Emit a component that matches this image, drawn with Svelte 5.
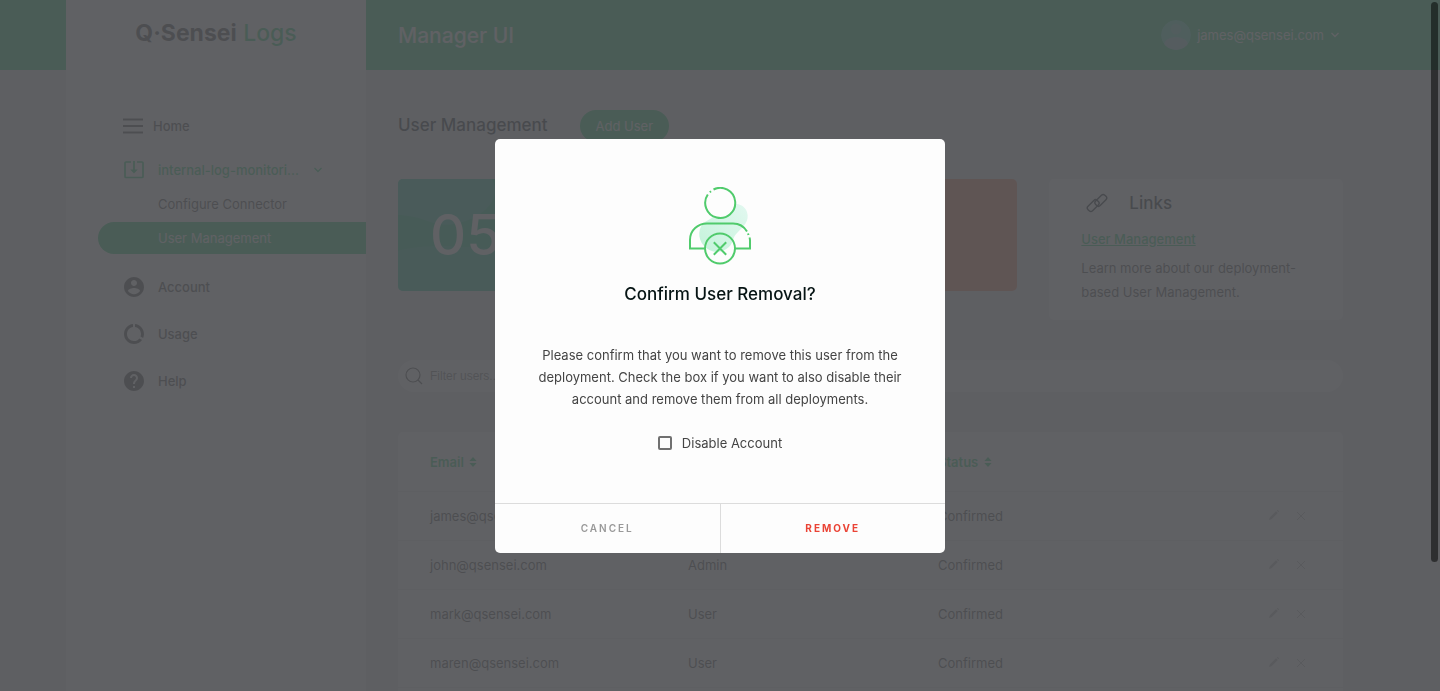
<script lang="ts">
  let filter = $state('');
  let disableAccount = $state(false);
  let modalOpen = $state(true);

  const users = [
    { email: 'james@qsensei.com', role: 'Admin', status: 'Confirmed' },
    { email: 'john@qsensei.com', role: 'Admin', status: 'Confirmed' },
    { email: 'mark@qsensei.com', role: 'User', status: 'Confirmed' },
    { email: 'maren@qsensei.com', role: 'User', status: 'Confirmed' }
  ];

  let visibleUsers = $derived(users.filter((u) => u.email.includes(filter.trim())));

  function closeModal() {
    modalOpen = false;
  }
</script>

{#snippet chevron()}
  <svg class="chevron" width="10" height="6" viewBox="0 0 10 6" aria-hidden="true">
    <path d="M1.5 1 5 4.5 8.5 1" fill="none" stroke="currentColor" stroke-width="1.3" />
  </svg>
{/snippet}

{#snippet sortIcon()}
  <svg width="8" height="10" viewBox="0 0 8 10" aria-hidden="true">
    <path d="M4 0 7.6 4H.4zM4 10 .4 6h7.2z" fill="currentColor" />
  </svg>
{/snippet}

<div class="page">
  <header class="topbar">
    <div class="topbar-inner">
      <h1>Manager UI</h1>
      <button class="user-menu" type="button">
        <svg width="30" height="30" viewBox="0 0 30 30" aria-hidden="true">
          <clipPath id="avatar"><circle cx="15" cy="15" r="15" /></clipPath>
          <g clip-path="url(#avatar)">
            <circle cx="15" cy="15" r="15" fill="#50dcb8" />
            <circle cx="15" cy="9" r="5.5" fill="#70d4c0" />
            <ellipse cx="15" cy="25" rx="12" ry="8" fill="#8ccccc" />
          </g>
        </svg>
        <span>james@qsensei.com</span>
        {@render chevron()}
      </button>
    </div>
  </header>

  <aside class="sidebar">
    <div class="logo"><b>Q·Sensei</b> <span>Logs</span></div>
    <nav>
      <a class="item home" href="#home">
        <svg width="20" height="16" viewBox="0 0 20 16" aria-hidden="true">
          <path d="M0 1.5h20M0 8h20M0 14.5h20" stroke="currentColor" stroke-width="2" />
        </svg>
        Home
      </a>
      <a class="item deployment" href="#deployment">
        <svg width="20" height="18" viewBox="0 0 20 18" aria-hidden="true">
          <path d="M7 1H2a1 1 0 0 0-1 1v13.500a1 1 0 0 0 1 1h16a1 1 0 0 0 1-1V2a1 1 0 0 0-1-1h-5" fill="none" stroke="currentColor" stroke-width="1.7" />
          <path d="M9.100 0h1.800v8.500h2.900L10 12.500 6.200 8.500h2.900z" fill="currentColor" />
        </svg>
        <span>internal-log-monitori...</span>
        {@render chevron()}
      </a>
      <a class="sub" href="#connector">Configure Connector</a>
      <a class="sub active" href="#users">User Management</a>
      <a class="item account" href="#account">
        <svg width="20" height="20" viewBox="2 2 20 20" aria-hidden="true">
          <path d="M12 2C6.480 2 2 6.480 2 12s4.480 10 10 10 10-4.480 10-10S17.520 2 12 2zm0 3c1.660 0 3 1.340 3 3s-1.340 3-3 3-3-1.340-3-3 1.340-3 3-3zm0 14.200c-2.500 0-4.710-1.280-6-3.220.030-1.990 4-3.080 6-3.080 1.990 0 5.970 1.090 6 3.080-1.290 1.940-3.500 3.220-6 3.220z" fill="currentColor" />
        </svg>
        Account
      </a>
      <a class="item" href="#usage">
        <svg width="20" height="20" viewBox="2 2 20 20" aria-hidden="true">
          <path d="M13 2.050v3.030c3.390.490 6 3.390 6 6.920 0 .900-.180 1.750-.480 2.540l2.600 1.530c.560-1.240.880-2.620.880-4.070 0-5.180-3.950-9.450-9-9.950zM12 19c-3.870 0-7-3.130-7-7 0-3.530 2.610-6.430 6-6.920V2.050c-5.060.500-9 4.760-9 9.950 0 5.520 4.470 10 9.990 10 3.310 0 6.240-1.610 8.060-4.090l-2.600-1.530C16.170 17.980 14.210 19 12 19z" fill="currentColor" />
        </svg>
        Usage
      </a>
      <a class="item" href="#help">
        <svg width="20" height="20" viewBox="2 2 20 20" aria-hidden="true">
          <path d="M12 2C6.480 2 2 6.480 2 12s4.480 10 10 10 10-4.480 10-10S17.520 2 12 2zm1 17h-2v-2h2v2zm2.070-7.750l-.9.920C13.450 12.900 13 13.500 13 15h-2v-.500c0-1.100.450-2.100 1.170-2.830l1.240-1.260c.370-.360.590-.860.590-1.410 0-1.100-.9-2-2-2s-2 .9-2 2H8c0-2.210 1.790-4 4-4s4 1.790 4 4c0 .880-.360 1.680-.930 2.250z" fill="currentColor" />
        </svg>
        Help
      </a>
    </nav>
  </aside>

  <main>
    <div class="heading">
      <h2>User Management</h2>
      <button type="button">Add User</button>
    </div>

    <section class="cards">
      <div class="stat total">
        <svg class="waves" viewBox="0 0 294 112" preserveAspectRatio="none" aria-hidden="true">
          <path d="M0 0H94C110 30 60 52 36 44 20 38 8 36 0 36z" fill="#24c49c" />
          <path d="M0 72C34 62 90 70 140 74s110 20 154 0v38H0z" fill="#24c49c" opacity=".7" />
        </svg>
        <strong>05</strong>
      </div>
      <div class="stat pending"></div>
      <div class="links">
        <h3>
          <svg width="22" height="20" viewBox="0 0 22 20" aria-hidden="true">
            <g fill="none" stroke="currentColor" stroke-width="1.4">
              <rect x="-6.500" y="-3.200" width="13" height="6.400" rx="2.400" transform="translate(7.200 12.600) rotate(-45)" />
              <rect x="-6.500" y="-3.200" width="13" height="6.400" rx="2.400" transform="translate(14.800 7.400) rotate(-45)" />
            </g>
          </svg>
          Links
        </h3>
        <a href="#docs">User Management</a>
        <p>Learn more about our deployment-based User Management.</p>
      </div>
    </section>

    <label class="search">
      <svg width="18" height="18" viewBox="0 0 18 18" aria-hidden="true">
        <circle cx="8" cy="8" r="7" fill="none" stroke="currentColor" stroke-width="1.200" />
        <path d="m13 13 4 4" stroke="currentColor" stroke-width="1.200" />
      </svg>
      <input type="text" placeholder="Filter users..." aria-label="Filter users" bind:value={filter} />
    </label>

    <div class="panel">
      <table>
        <colgroup>
          <col class="col-email" />
          <col class="col-role" />
          <col />
          <col class="col-actions" />
        </colgroup>
        <thead>
          <tr>
            <th>Email {@render sortIcon()}</th>
            <th>Role {@render sortIcon()}</th>
            <th>Status {@render sortIcon()}</th>
            <th></th>
          </tr>
        </thead>
        <tbody>
          {#each visibleUsers as user (user.email)}
            <tr>
              <td>{user.email}</td>
              <td>{user.role}</td>
              <td>{user.status}</td>
              <td>
                <div class="actions">
                  <button type="button" aria-label="Edit user">
                    <svg width="12" height="12" viewBox="0 0 12 12" aria-hidden="true">
                      <path d="M1 11l.7-2.500L8 2.300 9.700 4 3.500 10.300zM8.800 1.600l.8-.8 1.600 1.600-.8.8z" fill="currentColor" />
                    </svg>
                  </button>
                  <button type="button" aria-label="Remove user" onclick={() => (modalOpen = true)}>
                    <svg width="10" height="10" viewBox="0 0 10 10" aria-hidden="true">
                      <path d="m1 1 8 8M9 1 1 9" stroke="currentColor" />
                    </svg>
                  </button>
                </div>
              </td>
            </tr>
          {/each}
        </tbody>
      </table>
    </div>
  </main>
</div>

{#if modalOpen}
  <div class="overlay">
    <div class="modal" role="dialog" aria-modal="true" aria-labelledby="modal-title">
      <div class="modal-body">
        <svg width="64" height="78" viewBox="0 0 64 78" aria-hidden="true">
          <defs>
            <linearGradient id="blob" x1="0" y1="1" x2="1" y2="0">
              <stop offset="0" stop-color="#c4f3da" />
              <stop offset="1" stop-color="#e2f8f0" />
            </linearGradient>
          </defs>
          <path d="M36 21C43 14 56 16 59 25c3 9-4 15-9 20-6 5-4 10-9 15-7 7-19 6-25-1-7-8-6-19 1-24 7-4 13-8 19-14z" fill="url(#blob)" />
          <circle cx="32" cy="15.500" r="15" fill="#fdfdfd" />
          <g fill="none" stroke="#50cb6c" stroke-width="2">
            <path d="M25.500 2.500A15 15 0 1 1 19.800 7.500" />
            <path d="M21.800 5.200l1.200-1" />
            <path d="M17 61.500H2V53C2 43 10 36.500 19 36.500h26c6 0 11 3 14 8" />
            <path d="M60 46.500l.5 1.500M61.500 50.500c.4 1 .5 2 .5 3v8H47" />
            <circle cx="32" cy="61.500" r="15" />
            <path d="M25.800 55.300l12.400 12.400M38.200 55.300 25.800 67.700" />
          </g>
        </svg>
        <h2 id="modal-title">Confirm User Removal?</h2>
        <p>
          Please confirm that you want to remove this user from the deployment. Check the box if you
          want to also disable their account and remove them from all deployments.
        </p>
        <label>
          <input type="checkbox" bind:checked={disableAccount} />
          Disable Account
        </label>
      </div>
      <div class="modal-footer">
        <button type="button" onclick={closeModal}>CANCEL</button>
        <button type="button" class="danger" onclick={closeModal}>REMOVE</button>
      </div>
    </div>
  </div>
{/if}

<div class="scroll-thumb"></div>

<style>
  :global(body) {
    overflow: hidden;
    background: #e6e6ea;
    font-family: Inter, sans-serif;
    font-size: 13px;
    color: #444;
  }

  h1,
  h2,
  h3,
  p {
    margin: 0;
    font-weight: 500;
  }

  button {
    padding: 0;
    border: 0;
    background: none;
    font: inherit;
    color: inherit;
    cursor: pointer;
  }

  svg {
    flex-shrink: 0;
  }

  .page {
    display: grid;
    grid-template-columns: minmax(0, 1fr) 300px minmax(0, 1008px) minmax(0, 1fr);
    grid-template-rows: 70px 1fr;
    height: 100vh;
    overflow: hidden;
  }

  .topbar {
    display: grid;
    grid-template-columns: subgrid;
    grid-column: 1 / -1;
    grid-row: 1;
    background: #1fcc70;
    color: #fdfdfd;
  }

  .topbar-inner {
    display: flex;
    align-items: center;
    justify-content: space-between;
    grid-column: 3;
    padding: 0 34px 0 32px;
  }

  h1 {
    font-size: 21px;
  }

  .user-menu {
    display: flex;
    align-items: center;
    gap: 6px;
  }

  .sidebar {
    grid-column: 2;
    grid-row: 1 / 3;
    background: #fdfdfd;
  }

  .logo {
    height: 66px;
    margin-bottom: 43px;
    line-height: 66px;
    font-size: 23px;
    text-align: center;
  }

  .logo b {
    font-weight: 700;
  }

  .logo span {
    font-weight: 500;
    color: #1fcc70;
  }

  nav {
    display: flex;
    flex-direction: column;
    padding-left: 32px;
  }

  nav a {
    display: flex;
    align-items: center;
    color: inherit;
    text-decoration: none;
    white-space: nowrap;
  }

  .item {
    gap: 14px;
    height: 34px;
    margin-bottom: 13px;
    padding-left: 26px;
    font-weight: 500;
  }

  .home {
    gap: 10px;
    margin-bottom: 10px;
    padding-left: 25px;
  }

  nav .deployment {
    margin-bottom: 1px;
    color: #1fcc70;
  }

  .deployment span {
    flex: 0 0 138px;
  }

  .sub {
    height: 32px;
    margin-bottom: 2px;
    padding-left: 60px;
    border-radius: 16px 0 0 16px;
  }

  nav .active {
    background: #1fcc70;
    color: #fdfdfd;
  }

  .account {
    margin-top: 14px;
  }

  main {
    grid-column: 3;
    grid-row: 2;
    min-height: 0;
    padding: 40px 31px 0 32px;
  }

  .heading {
    display: flex;
    gap: 32px;
    margin-bottom: 37px;
  }

  .heading h2 {
    line-height: 30px;
    font-size: 17px;
    color: #101820;
  }

  .heading button {
    height: 32px;
    padding: 0 16px;
    border-radius: 16px;
    background: #1fcc70;
    color: #fdfdfd;
  }

  .cards {
    display: grid;
    grid-template-columns: repeat(3, minmax(0, 1fr));
    align-items: start;
    gap: 32px;
    margin-bottom: 40px;
  }

  .stat {
    position: relative;
    height: 112px;
    border-radius: 5px;
    overflow: hidden;
  }

  .total {
    background: #08c07c;
  }

  .pending {
    background: #f48860;
  }

  .waves {
    position: absolute;
    inset: 0;
    width: 100%;
    height: 100%;
  }

  .stat strong {
    position: relative;
    display: block;
    padding-left: 32px;
    line-height: 112px;
    font-size: 56px;
    font-weight: 500;
    color: #fdfdfd;
  }

  .links {
    padding: 12px 32px 15px;
    border-radius: 5px;
    background: #fdfdfd;
    line-height: 24px;
  }

  .links h3 {
    display: flex;
    align-items: center;
    gap: 21px;
    margin-bottom: 12px;
    padding-left: 5px;
    font-size: 17px;
    color: #101820;
  }

  .links a {
    display: block;
    margin-bottom: 5px;
    font-weight: 500;
    color: #1fcc70;
  }

  .links p {
    padding-bottom: 1px;
    font-weight: 400;
  }

  .search {
    display: flex;
    align-items: center;
    gap: 7px;
    height: 32px;
    margin-bottom: 40px;
    padding: 0 7px;
    border-radius: 16px;
    background: #fdfdfd;
  }

  .search input {
    flex: 1;
    padding: 0;
    border: 0;
    outline: none;
    background: none;
    font: 12px 'Liberation Sans', sans-serif;
    color: #383838;
  }

  .search input::placeholder {
    color: #757575;
  }

  .panel {
    padding-bottom: 16px;
    border-radius: 5px;
    background: #fdfdfd;
  }

  table {
    width: 100%;
    table-layout: fixed;
    border-collapse: separate;
    border-spacing: 0;
  }

  .col-email {
    width: 290px;
  }

  .col-role {
    width: 250px;
  }

  .col-actions {
    width: 100px;
  }

  th,
  td {
    box-sizing: border-box;
    height: 49px;
    padding: 0;
    border-bottom: 1px solid #ececec;
    text-align: left;
  }

  th {
    height: 60px;
    font-weight: 600;
    color: #1fcc70;
  }

  th svg {
    margin-left: 2px;
  }

  th:first-child,
  td:first-child {
    padding-left: 32px;
  }

  .actions {
    display: flex;
    justify-content: flex-end;
    gap: 16px;
    padding-right: 37px;
    color: #b8b8b8;
  }

  .overlay {
    position: fixed;
    inset: 0;
    display: flex;
    align-items: center;
    justify-content: center;
    background: rgba(79, 80, 83, 0.9);
  }

  .modal {
    width: 450px;
    border-radius: 5px;
    background: #fdfdfd;
    overflow: hidden;
  }

  .modal-body {
    display: flex;
    flex-direction: column;
    align-items: center;
    padding: 48px 40px 50px;
    text-align: center;
  }

  .modal h2 {
    margin: 18px 0 39px;
    line-height: 22px;
    font-size: 17px;
    color: #061414;
  }

  .modal p {
    line-height: 22px;
    font-weight: 400;
  }

  .modal label {
    display: flex;
    align-items: center;
    gap: 10px;
    height: 20px;
    margin-top: 23px;
  }

  .modal input {
    appearance: none;
    width: 14px;
    height: 14px;
    margin: 0;
    border: 2px solid #707070;
    border-radius: 2px;
  }

  .modal input:checked {
    background: #50cb6c;
  }

  .modal-footer {
    display: flex;
    height: 49px;
    border-top: 1px solid #dcdcdc;
  }

  .modal-footer button {
    flex: 1;
    font-size: 10px;
    font-weight: 600;
    letter-spacing: 2px;
    color: #999;
  }

  .modal-footer .danger {
    border-left: 1px solid #dcdcdc;
    font-weight: 700;
    color: #ea4335;
  }

  .scroll-thumb {
    position: fixed;
    top: 2px;
    right: 2px;
    width: 7px;
    height: 81vh;
    border-radius: 4px;
    background: rgba(0, 0, 0, 0.5);
  }
</style>
